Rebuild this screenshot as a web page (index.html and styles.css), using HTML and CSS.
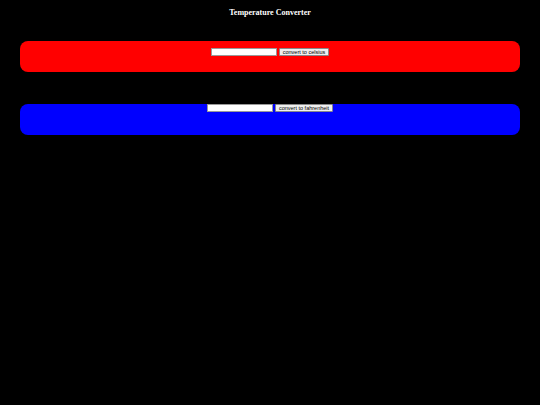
FILE: index.html
```html
<!DOCTYPE html>
<html>
<head>
<meta charset="utf-8">
<link rel="stylesheet" href="styles.css">
</head>
<body>
<h1 class="title">Temperature Converter</h1>
<div class="panel panel-red">
  <div class="row">
    <input class="field" type="text">
    <button class="btn">convert to celsius</button>
  </div>
</div>
<div class="panel panel-blue">
  <div class="row">
    <input class="field" type="text">
    <button class="btn">convert to fahrenheit</button>
  </div>
</div>
</body>
</html>
```
FILE: styles.css
```css
html, body {
  margin: 0;
  padding: 0;
  background: #000;
}
body {
  display: flex;
  flex-direction: column;
  padding: 0 20px;
}
.title {
  margin: 0;
  padding-top: 8px;
  height: 41px;
  box-sizing: border-box;
  text-align: center;
  color: #fff;
  font-family: "Liberation Serif", serif;
  font-weight: bold;
  font-size: 8px;
  line-height: 9px;
}
.panel {
  height: 31px;
  border-radius: 8px;
  box-sizing: border-box;
}
.panel-red {
  background: #ff0000;
  padding-top: 7px;
}
.panel-blue {
  background: #0000ff;
  margin-top: 32px;
  padding-top: 0;
}
.row {
  display: flex;
  justify-content: center;
  align-items: center;
  gap: 2px;
}
.field {
  width: 66px;
  height: 8px;
  box-sizing: border-box;
  border: 1px solid #999;
  background: #fff;
  padding: 0;
  margin: 0;
}
.btn {
  height: 8px;
  box-sizing: border-box;
  padding: 0 3px;
  margin: 0;
  border: 1px solid #888;
  border-radius: 1px;
  background: #efefef;
  font-family: "Liberation Sans", Arial, sans-serif;
  font-size: 5.5px;
  line-height: 6px;
  color: #000;
}
```
